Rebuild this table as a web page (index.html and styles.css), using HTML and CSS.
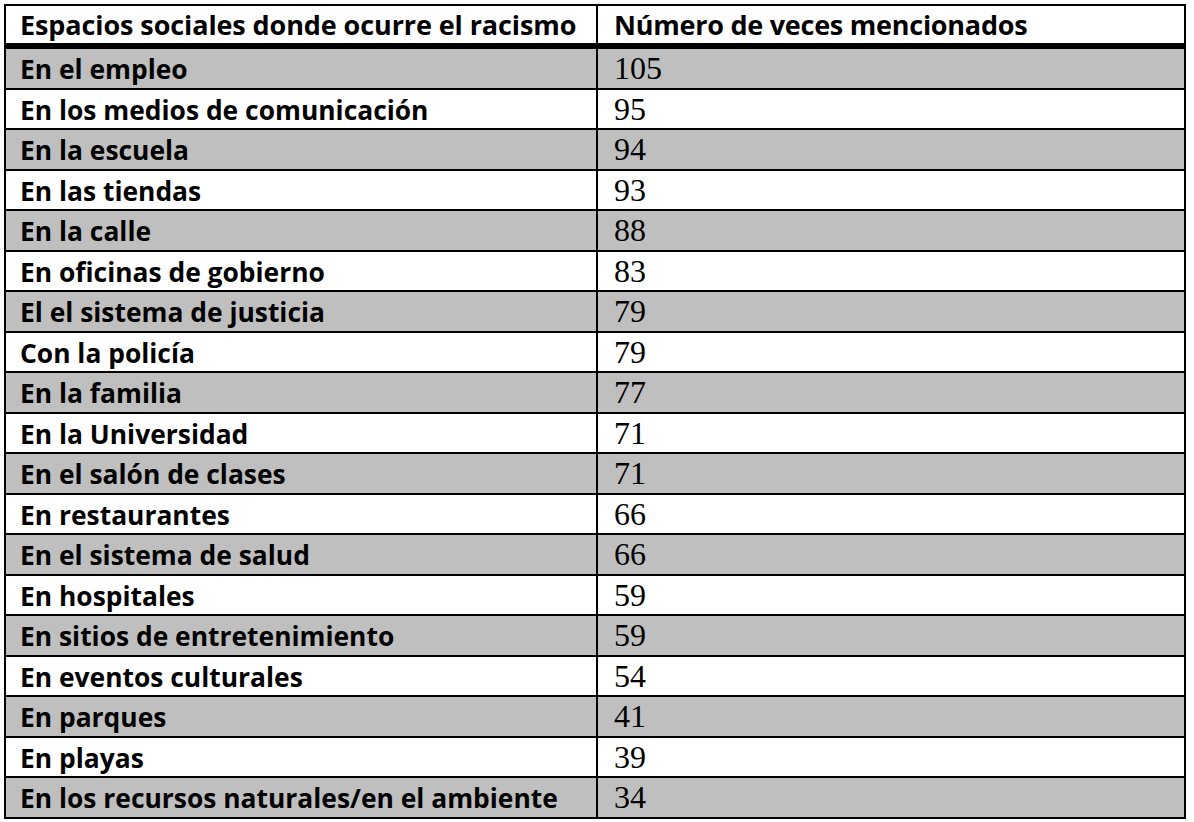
FILE: index.html
```html
<!DOCTYPE html>
<html lang="es">
<head>
<meta charset="utf-8">
<title>Espacios sociales donde ocurre el racismo</title>
<link rel="stylesheet" href="styles.css">
</head>
<body>
<table class="data">
  <thead>
    <tr class="head">
      <th class="label">Espacios sociales donde ocurre el racismo</th>
      <th class="count">Número de veces mencionados</th>
    </tr>
  </thead>
  <tbody>
    <tr class="shade"><td class="label">En el empleo</td><td class="count">105</td></tr>
    <tr><td class="label">En los medios de comunicación</td><td class="count">95</td></tr>
    <tr class="shade"><td class="label">En la escuela</td><td class="count">94</td></tr>
    <tr><td class="label">En las tiendas</td><td class="count">93</td></tr>
    <tr class="shade"><td class="label">En la calle</td><td class="count">88</td></tr>
    <tr><td class="label">En oficinas de gobierno</td><td class="count">83</td></tr>
    <tr class="shade"><td class="label">El el sistema de justicia</td><td class="count">79</td></tr>
    <tr><td class="label">Con la policía</td><td class="count">79</td></tr>
    <tr class="shade"><td class="label">En la familia</td><td class="count">77</td></tr>
    <tr><td class="label">En la Universidad</td><td class="count">71</td></tr>
    <tr class="shade"><td class="label">En el salón de clases</td><td class="count">71</td></tr>
    <tr><td class="label">En restaurantes</td><td class="count">66</td></tr>
    <tr class="shade"><td class="label">En el sistema de salud</td><td class="count">66</td></tr>
    <tr><td class="label">En hospitales</td><td class="count">59</td></tr>
    <tr class="shade"><td class="label">En sitios de entretenimiento</td><td class="count">59</td></tr>
    <tr><td class="label">En eventos culturales</td><td class="count">54</td></tr>
    <tr class="shade"><td class="label">En parques</td><td class="count">41</td></tr>
    <tr><td class="label">En playas</td><td class="count">39</td></tr>
    <tr class="shade"><td class="label">En los recursos naturales/en el ambiente</td><td class="count">34</td></tr>
  </tbody>
</table>
</body>
</html>
```

FILE: styles.css
```css
html, body {
  margin: 0;
  padding: 0;
  background: #ffffff;
}

body {
  padding: 4px;
}

.data {
  width: 1182px;
  table-layout: fixed;
  border-collapse: separate;
  border-spacing: 0;
  border-top: 2px solid #000;
  border-left: 2px solid #000;
  border-right: 2px solid #000;
  color: #000;
}

.data th,
.data td {
  padding: 0 0 0 14px;
  border-bottom: 2px solid #000;
  text-align: left;
  vertical-align: top;
  white-space: nowrap;
  overflow: hidden;
  font-variant-ligatures: none;
}

.data .label {
  width: 576px;
  border-right: 2px solid #000;
}

.data th {
  font-family: "Open Sans", "Liberation Sans", sans-serif;
  font-weight: 700;
  font-size: 27px;
  line-height: 37px;
  letter-spacing: -0.1px;
  border-bottom-width: 6px;
}

.data th.count {
  padding-left: 16px;
  letter-spacing: -0.25px;
}

.data td.label {
  font-family: "Open Sans", "Liberation Sans", sans-serif;
  font-weight: 700;
  font-size: 26.4px;
  line-height: 36.5px;
  padding-top: 2px;
}

.data td.count {
  font-family: "Liberation Serif", "DejaVu Serif", serif;
  font-weight: 400;
  font-size: 32px;
  line-height: 38.5px;
  padding-left: 16px;
}

.shade td {
  background: #bfbfbf;
}
```
